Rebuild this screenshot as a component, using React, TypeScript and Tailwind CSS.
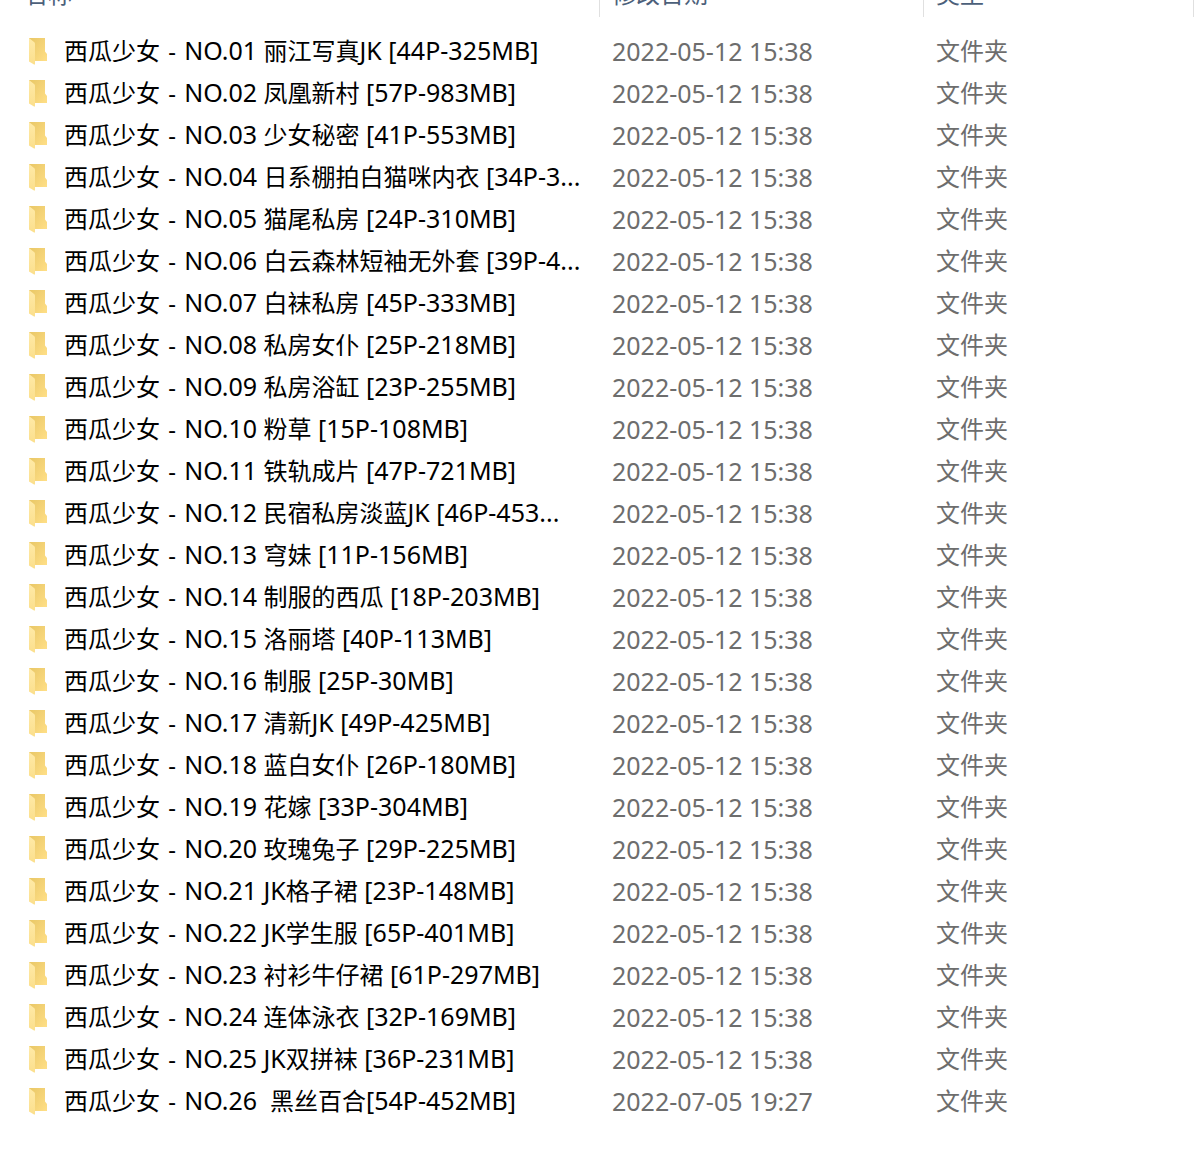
type Folder = {
  title: string;
  modified: string;
};

const SERIES = '西瓜少女';
const MODIFIED = '2022-05-12 15:38';

const folders: Folder[] = [
  { title: 'NO.01 丽江写真JK [44P-325MB]', modified: MODIFIED },
  { title: 'NO.02 凤凰新村 [57P-983MB]', modified: MODIFIED },
  { title: 'NO.03 少女秘密 [41P-553MB]', modified: MODIFIED },
  { title: 'NO.04 日系棚拍白猫咪内衣 [34P-3...', modified: MODIFIED },
  { title: 'NO.05 猫尾私房 [24P-310MB]', modified: MODIFIED },
  { title: 'NO.06 白云森林短袖无外套 [39P-4...', modified: MODIFIED },
  { title: 'NO.07 白袜私房 [45P-333MB]', modified: MODIFIED },
  { title: 'NO.08 私房女仆 [25P-218MB]', modified: MODIFIED },
  { title: 'NO.09 私房浴缸 [23P-255MB]', modified: MODIFIED },
  { title: 'NO.10 粉草 [15P-108MB]', modified: MODIFIED },
  { title: 'NO.11 铁轨成片 [47P-721MB]', modified: MODIFIED },
  { title: 'NO.12 民宿私房淡蓝JK [46P-453...', modified: MODIFIED },
  { title: 'NO.13 穹妹 [11P-156MB]', modified: MODIFIED },
  { title: 'NO.14 制服的西瓜 [18P-203MB]', modified: MODIFIED },
  { title: 'NO.15 洛丽塔 [40P-113MB]', modified: MODIFIED },
  { title: 'NO.16 制服 [25P-30MB]', modified: MODIFIED },
  { title: 'NO.17 清新JK [49P-425MB]', modified: MODIFIED },
  { title: 'NO.18 蓝白女仆 [26P-180MB]', modified: MODIFIED },
  { title: 'NO.19 花嫁 [33P-304MB]', modified: MODIFIED },
  { title: 'NO.20 玫瑰兔子 [29P-225MB]', modified: MODIFIED },
  { title: 'NO.21 JK格子裙 [23P-148MB]', modified: MODIFIED },
  { title: 'NO.22 JK学生服 [65P-401MB]', modified: MODIFIED },
  { title: 'NO.23 衬衫牛仔裙 [61P-297MB]', modified: MODIFIED },
  { title: 'NO.24 连体泳衣 [32P-169MB]', modified: MODIFIED },
  { title: 'NO.25 JK双拼袜 [36P-231MB]', modified: MODIFIED },
  { title: 'NO.26  黑丝百合[54P-452MB]', modified: '2022-07-05 19:27' },
];

function FolderIcon() {
  return (
    <svg width="18" height="27" viewBox="0 0 18 27" className="shrink-0" aria-hidden="true">
      <defs>
        <linearGradient id="folder-back" x1="0" y1="0" x2="1" y2="1">
          <stop offset="0" stopColor="#e9c766" />
          <stop offset="1" stopColor="#ffdf87" />
        </linearGradient>
        <linearGradient id="folder-flap" x1="0" y1="0" x2="0" y2="1">
          <stop offset="0" stopColor="#ffeaa8" />
          <stop offset="1" stopColor="#fbdf8c" />
        </linearGradient>
      </defs>
      <path d="M0 0H16V13.5L18 16V23H5L0 20Z" fill="url(#folder-back)" />
      <path d="M0 0L5.6 4.5Q6 5 6 6V26.5H5L0 23.5Z" fill="url(#folder-flap)" />
    </svg>
  );
}

// Latin glyphs look small beside the Chinese ones, so they are set one pixel larger
function MixedText({ text }: { text: string }) {
  const runs = text.match(/[\u4e00-\u9fff]+|[^\u4e00-\u9fff]+/g) ?? [];

  return runs.map((run, i) =>
    /[\u4e00-\u9fff]/.test(run) ? (
      run
    ) : (
      <span key={i} className="text-[25px] leading-none">
        {run}
      </span>
    )
  );
}

export default function App() {
  return (
    <main className="min-h-screen overflow-hidden bg-white pb-12 font-['Noto_Sans','Noto_Sans_CJK_SC',sans-serif] text-2xl text-black">
      <table className="w-full table-fixed border-collapse text-left">
        <colgroup>
          <col className="w-[600px]" />
          <col className="w-[324px]" />
          <col />
        </colgroup>
        <thead>
          <tr className="text-[#4c607a]">
            <th className="p-0 font-normal">
              <div className="flex h-[17px] items-end border-r border-[#e0e0e0] pb-[7px] pl-6 leading-8">名称</div>
            </th>
            <th className="p-0 font-normal">
              <div className="flex h-[17px] items-end border-r border-[#e0e0e0] pb-[7px] pl-3 leading-8">修改日期</div>
            </th>
            <th className="p-0 pr-[3px] font-normal">
              <div className="flex h-[17px] items-end border-r border-[#e0e0e0] pb-[7px] pl-3 leading-8">类型</div>
            </th>
          </tr>
        </thead>
        <tbody className="before:block before:h-[13px]">
          {folders.map((folder) => (
            <tr key={folder.title} className="h-[42px]">
              <td className="p-0 pl-[29px]">
                <div className="flex items-center gap-[17px]">
                  <FolderIcon />
                  <span className="whitespace-pre leading-8">
                    {SERIES}
                    <span className="px-0.5"> - </span>
                    <MixedText text={folder.title} />
                  </span>
                </div>
              </td>
              <td className="p-0 pl-3 text-[25px] leading-[30px] text-[#6d6d6d]">{folder.modified}</td>
              <td className="p-0 pl-3 leading-8 text-[#6d6d6d]">文件夹</td>
            </tr>
          ))}
        </tbody>
      </table>
    </main>
  );
}
